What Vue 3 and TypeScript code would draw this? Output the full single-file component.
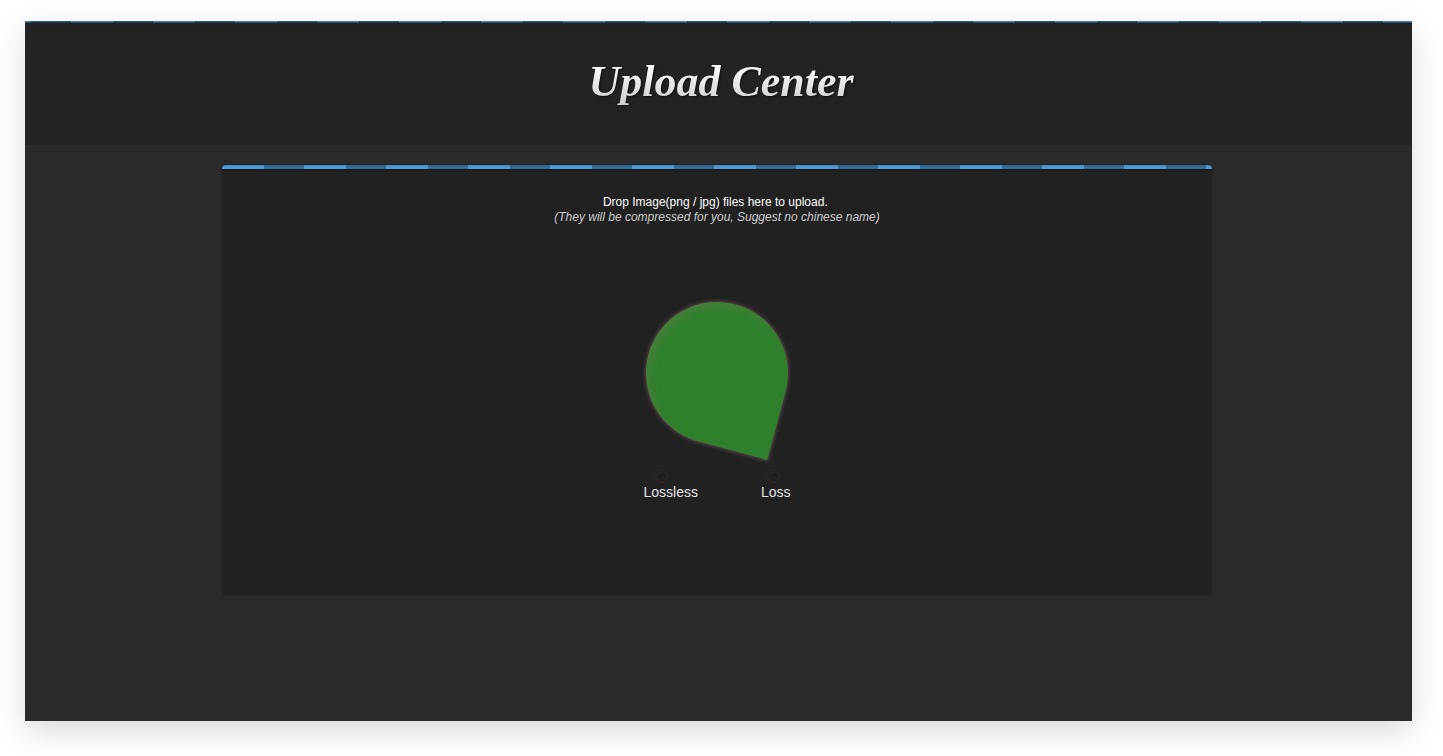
<script setup lang="ts">
import { ref } from 'vue'

type Mode = 'lossless' | 'loss'

const picker = ref<HTMLInputElement | null>(null)
const mode = ref<Mode | null>(null)
const modes: { id: Mode; label: string }[] = [
  { id: 'lossless', label: 'Lossless' },
  { id: 'loss', label: 'Loss' },
]

function choose(): void {
  picker.value?.click()
}
</script>

<template>
  <div class="page">
    <div class="window">
      <header class="header">
        <h1 class="title">Upload Center</h1>
      </header>
      <main class="main">
        <section class="panel">
          <p class="hint">
            Drop Image(png / jpg) files here to upload.&nbsp;<br />
            <i class="note">(They will be compressed for you, Suggest no chinese name)</i>
          </p>
          <button class="drop" type="button" aria-label="Choose images" @click="choose"></button>
          <input ref="picker" type="file" accept="image/png,image/jpeg" multiple hidden />
          <form class="modes">
            <label v-for="m in modes" :key="m.id" :class="['mode', m.id]">
              <input v-model="mode" class="radio" type="radio" name="mode" :value="m.id" />
              <span>{{ m.label }}</span>
            </label>
          </form>
        </section>
      </main>
    </div>
  </div>
</template>

<style>
body {
  margin: 0;
  background: #fff;
}
</style>

<style scoped>
.page {
  box-sizing: border-box;
  min-height: 100vh;
  padding: 21px 31px 35px 25px;
  display: flex;
  overflow: hidden;
  font-family: "Liberation Sans", Arial, sans-serif;
}
.window {
  flex: 1;
  display: flex;
  flex-direction: column;
  background: #2a2a2b;
  box-shadow: 0 10px 30px rgba(0, 0, 0, 0.15);
}
.header {
  box-sizing: border-box;
  height: 124px;
  display: flex;
  justify-content: center;
  padding: 31px 0 0 5px;
  background:
    linear-gradient(rgba(0, 0, 0, 0), rgba(0, 0, 0, 0.6)) 0 0 / 100% 2px no-repeat,
    repeating-linear-gradient(90deg, #4a94cf 0 42px, #2f6a98 42px 82px) -36px 0 / 1640px 2px repeat-x,
    linear-gradient(#1b1b1c, #232324 4px);
}
.title {
  margin: 0;
  font: italic bold 44px/60px "Liberation Serif", "Times New Roman", serif;
  color: transparent;
  background: linear-gradient(#fff 12px, #cfcfcf 52px);
  background-clip: text;
  -webkit-background-clip: text;
  filter: drop-shadow(1px 1px 1px rgba(0, 0, 0, 0.6));
}
.main {
  display: flex;
  justify-content: center;
  padding: 20px 3px 20px 0;
}
.panel {
  box-sizing: border-box;
  width: 990px;
  max-width: 100%;
  min-height: 430px;
  padding: 30px 0 40px;
  display: flex;
  flex-direction: column;
  align-items: center;
  border-radius: 4px;
  background:
    linear-gradient(rgba(0, 0, 0, 0.3), rgba(0, 0, 0, 0) 1px) 0 0 / 100% 4px no-repeat,
    repeating-linear-gradient(90deg, #4d9bd8 0 42px, #336d9b 42px 82px) 0 0 / 100% 4px no-repeat,
    linear-gradient(#171718 4px, #212122 7px);
  box-shadow: 0 0 2px rgba(0, 0, 0, 0.35);
}
.hint {
  margin: 0;
  font-size: 12px;
  line-height: 15px;
  text-align: center;
  color: #fff;
}
.note {
  color: #ccc;
}
.drop {
  width: 142px;
  height: 142px;
  margin-top: 77px;
  padding: 0;
  border: 0;
  border-radius: 50% 50% 0 50%;
  transform: rotate(15deg);
  background: #2e802b;
  box-shadow:
    0 0 4px 1px rgba(120, 85, 95, 0.7),
    inset 5px 3px 8px rgba(200, 120, 140, 0.16);
  cursor: pointer;
}
.modes {
  width: 147px;
  margin-top: 25px;
  display: flex;
  justify-content: space-between;
}
.mode {
  display: flex;
  flex-direction: column;
  font-size: 14px;
  line-height: 16px;
  color: #e6e6e6;
}
.radio {
  appearance: none;
  box-sizing: border-box;
  width: 14px;
  height: 14px;
  margin: 0 0 1px 10px;
  border: 1px solid #322829;
  border-radius: 50%;
  background: radial-gradient(circle at 7px 7px, #1f1f20 4px, #2e2728 5px, #212122 6px);
}
.loss .radio {
  margin-left: 5px;
}
.radio:checked {
  background: #2e802b;
}
</style>
